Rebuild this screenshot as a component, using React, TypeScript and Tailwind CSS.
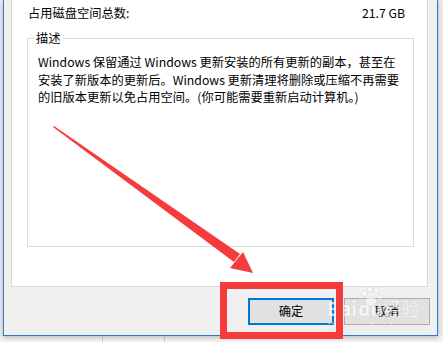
import React from "react";

const font = { fontFamily: '"Noto Sans CJK SC", "Noto Sans", sans-serif' };

function Arrow() {
  return (
    <svg className="absolute left-0 top-0 pointer-events-none" width="443" height="342" viewBox="0 0 443 342">
      {/* tapered shaft */}
      <polygon points="53,127 54,126 240,254 234,262" fill="#f53b3b" />
      {/* head */}
      <polygon points="243,252 253,273 230,268" fill="#f53b3b" />
      {/* highlight box */}
      <rect x="223.5" y="285.5" width="116" height="50" fill="none" stroke="#f53b3b" strokeWidth="7" />
    </svg>
  );
}

function Watermark() {
  return (
    <div className="absolute left-[327px] top-[298px] pointer-events-none select-none opacity-70" style={font}>
      <div className="relative flex items-end leading-none text-[19px] font-bold text-white [text-shadow:0_0_1px_#b5b5b5]">
        <span>Bai</span>
        <svg className="absolute left-[31px] top-[-12px]" width="26" height="22" viewBox="0 0 22 20">
          <g fill="#ffffff" opacity="0.8" stroke="#c8c8c8" strokeWidth="0.6">
            <circle cx="5" cy="7" r="2.5" />
            <circle cx="10" cy="3" r="2.5" />
            <circle cx="16" cy="4" r="2.5" />
            <circle cx="19" cy="10" r="2.2" />
            <ellipse cx="11" cy="14" rx="5" ry="4.5" />
          </g>
        </svg>
        <span className="ml-[1px]">du</span>
        <span className="ml-[1px] text-[18px] font-normal">经验</span>
      </div>
      <div className="mt-[5px] ml-[1px] text-[10px] leading-none tracking-[0.7px] text-white [text-shadow:0_0_1px_#b5b5b5]">
        jingyan.baidu.com
      </div>
    </div>
  );
}

export default function App() {
  return (
    <div className="relative w-[443px] h-[342px] overflow-hidden bg-[#e8e8e8]" style={font}>
      {/* window behind */}
      <div className="absolute left-0 top-[336px] w-[443px] h-[6px] bg-[#f2f2f2] flex">
        <div className="w-[103px] border-r border-[#d0d0d0]" />
        <div className="w-[62px] border-r border-[#d0d0d0]" />
      </div>

      {/* dialog */}
      <div className="relative ml-[3px] w-[435px] h-[336px] bg-[#f0f0f0] border-l border-r border-b border-[#2a7bd0] shadow-[0_2px_4px_rgba(0,0,0,0.2)] flex flex-col">
        <div className="ml-[7px] mr-[9px] h-[287px] bg-white border-l border-r border-b border-[#d9d9d9] flex flex-col">
          <div className="flex justify-between items-center h-[26px] pl-[16px] pr-[22px] text-[12.25px] text-black">
            <span>占用磁盘空间总数:</span>
            <span>21.7 GB</span>
          </div>

          {/* group box */}
          <div className="relative mt-[12px] ml-[15px] mr-[13px] h-[209px] border border-[#dcdcdc]">
            <span className="absolute left-[6px] top-[-9px] bg-white px-[2px] text-[12.25px] leading-[17px] text-black">
              描述
            </span>
            <p className="pt-[15px] pl-[10px] text-[12.25px] leading-[17.5px] text-black whitespace-nowrap">
              Windows 保留通过 Windows 更新安装的所有更新的副本，甚至在
              <br />
              安装了新版本的更新后。Windows 更新清理将删除或压缩不再需要
              <br />
              的旧版本更新以免占用空间。(你可能需要重新启动计算机。)
            </p>
          </div>
        </div>

        {/* buttons */}
        <div className="flex justify-end gap-[10px] mt-[11px] mr-[7px]">
          <button className="w-[86px] h-[27px] bg-[#e1e1e1] border-2 border-[#0078d7] text-[12.25px] text-black">
            确定
          </button>
          <button className="w-[86px] h-[27px] bg-[#e1e1e1] border border-[#adadad] text-[12.25px] text-black">
            取消
          </button>
        </div>
      </div>

      <Watermark />
      <Arrow />
    </div>
  );
}
